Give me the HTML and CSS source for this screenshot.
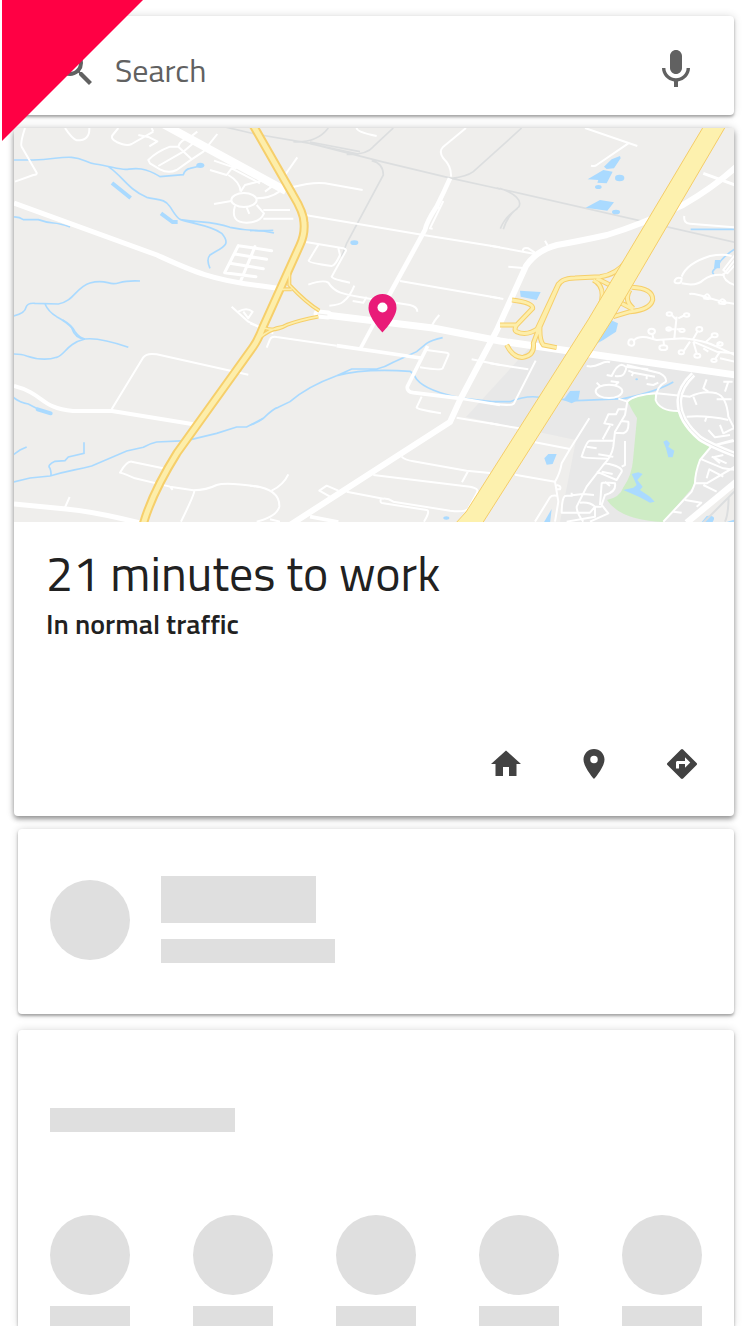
FILE: index.html
```html
<!DOCTYPE html>
<html lang="en">
<head>
<meta charset="utf-8">
<meta name="viewport" content="width=device-width, initial-scale=1">
<title>Commute</title>
<link rel="stylesheet" href="styles.css">
</head>
<body>
<div class="corner"></div>
<main class="feed">
  <form class="card search" role="search">
    <svg class="icon-lg" viewBox="0 0 24 24" aria-hidden="true"><path d="M15.500 14h-.79l-.28-.27A6.471 6.471 0 0 0 16 9.500 6.500 6.500 0 1 0 9.500 16c1.610 0 3.090-.59 4.230-1.570l.27.28v.79l5 4.990L20.490 19l-4.990-5zm-6 0C7.010 14 5 11.990 5 9.500S7.010 5 9.500 5 14 7.010 14 9.500 11.990 14 9.500 14z"/></svg>
    <input class="search-input" type="text" placeholder="Search" aria-label="Search">
    <button class="icon-button" type="button" aria-label="Voice search">
      <svg class="icon-lg" viewBox="0 -1 24 24" aria-hidden="true"><path d="M12 14c1.660 0 3-1.340 3-3V5c0-1.660-1.340-3-3-3S9 3.340 9 5v6c0 1.660 1.340 3 3 3zm5.300-3c0 3-2.540 5.100-5.300 5.100S6.700 14 6.700 11H5c0 3.410 2.720 6.230 6 6.720V20.500h2v-2.780c3.280-.48 6-3.300 6-6.720h-1.700z"/></svg>
    </button>
  </form>

  <article class="card commute">
    <svg class="map" viewBox="14 128 720 394" role="img" aria-label="Map of the route to work">
      <path fill="#e8e8e8" d="M466 417L530 347L734 376V485L690 522H560L576 440Z"/>
      <path fill="#ceecc5" d="M628 402Q638 394 655 394Q657 411 678 411Q690 436 711 447L700 460L693 487L663 522Q620 520 607 500Q620 497 623 488Q632 475 633 460L637 418L632 410Z"/>

      <!-- railways -->
      <g class="rail">
        <g transform="translate(250 120) scale(.3333)">
          <path d="M-100 15L15 42L180 70L395 125L605 175L750 207M130 65Q200 70 235 24M180 66L330 95M180 71L325 102M290 103Q350 105 370 80L430 24M365 122Q400 130 400 165L290 370L275 410M605 175Q650 170 670 155L815 24"/>
        </g>
        <g transform="translate(490 120) scale(.3333)">
          <path d="M20 204L735 367M30 205Q100 230 87 260Q50 290 40 328M83 265Q45 290 31 326"/>
        </g>
      </g>

      <!-- rivers and ponds -->
      <g class="water">
        <g transform="translate(10 120) scale(.3333)">
          <path d="M10 120H70C130 118 150 110 185 112S230 130 255 132C300 138 330 150 350 148S400 138 450 170L520 164Q525 148 540 145L570 138M295 140C340 170 350 205 410 232C440 240 465 235 480 260C490 275 500 295 512 299C580 310 600 302 660 322Q720 335 790 331M512 299C560 315 600 315 635 340C665 375 640 380 600 405Q588 418 600 445M10 291Q28 290 40 299H85Q110 308 130 309T180 321M10 588Q45 580 48 562Q52 548 75 550L145 552C190 545 200 500 240 489S290 490 310 491S330 480 390 483M105 552Q115 575 140 590Q170 606 185 623Q195 655 225 657"/>
          <path stroke-width="12" d="M306 189L362 234M453 280L488 306H503"/>
          <ellipse cx="571" cy="136" rx="12" ry="8"/>
        </g>
        <g transform="translate(250 120) scale(.3333)">
          <path d="M0 332Q30 330 72 339"/>
          <ellipse cx="313" cy="368" rx="12" ry="7"/>
        </g>
        <g transform="translate(490 120) scale(.3333)">
          <path class="pond" d="M342 140L365 118L390 108L392 115L372 145L350 147ZM293 178L340 150L368 155L350 190L322 188L325 180ZM287 263L330 240L372 247L352 272ZM90 512L152 516L140 540L92 530ZM675 420L690 420L690 445L672 445Z"/>
          <ellipse cx="389" cy="174" rx="14" ry="10"/><ellipse cx="325" cy="201" rx="10" ry="6"/><ellipse cx="378" cy="276" rx="12" ry="7"/>
          <path d="M602 328H735M738 385Q690 415 683 440Q660 455 672 463"/>
        </g>
        <g transform="translate(10 320) scale(.3333)">
          <path d="M10 102Q35 102 50 108Q100 125 140 112C165 105 170 70 225 57Q270 52 355 82M158 0Q185 15 195 35Q210 55 225 57M10 232Q30 248 55 252L85 268M10 404L30 390L50 381M10 486L60 474L120 468C180 450 190 452 245 438L350 393L400 382Q420 370 440 366L530 362L570 352L620 340L680 321H710L760 295M222 367V400L175 411L165 422L135 424Q110 435 120 445Q125 460 122 468"/>
          <path stroke-width="12" stroke-linecap="round" d="M83 268L122 280"/>
        </g>
        <g transform="translate(250 320) scale(.3333)">
          <path d="M0 315Q20 310 40 295Q70 265 85 262L120 245Q170 200 260 167L305 147H380Q405 142 430 127L500 95L530 70Q545 60 578 53M260 167Q340 145 480 154Q490 160 500 178Q530 215 640 235L725 245H780Q830 225 870 232L980 242L1120 236Q1220 215 1270 186"/>
          <ellipse cx="589" cy="594" rx="9" ry="5"/>
        </g>
        <g transform="translate(490 320) scale(.3333)">
          <path class="pond" d="M318 72L340 20L362 0L384 10L378 35L340 60ZM220 240L240 213L270 212L265 240L245 250ZM520 365L530 360L540 370L535 380L553 392L548 412L535 412L528 385ZM425 462L445 457L458 462L442 480L458 500L450 510L480 530L494 545L480 548L450 532L400 510L430 503L440 495ZM163 415L175 402L200 402L195 415L188 432L170 434ZM160 610L185 567L180 610ZM632 610L650 588Q685 585 665 610ZM710 606L735 598V610Z"/>
          <ellipse cx="440" cy="178" rx="4" ry="3"/>
        </g>
      </g>

      <!-- local streets -->
      <g class="street">
        <g transform="translate(10 120) scale(.3333)">
          <path d="M45 24Q30 70 35 80L80 158Q82 165 70 165L15 185M165 24Q185 55 200 61Q240 62 238 24M325 24L308 45Q300 55 320 66Q350 80 365 72L430 35M385 45L418 52L442 64L418 79M430 35L425 24M415 120Q440 95 480 80H505L545 118L500 150Q475 162 450 148L420 130ZM445 138L520 95L555 65M505 80Q510 60 540 52L562 35M545 118L580 95L622 42M600 150L650 165L665 145L750 190M612 122L680 145M655 165Q690 185 692 215M692 215L705 195L755 182L785 200L765 215M664 243L612 252M675 258Q660 308 710 308Q750 308 762 280L740 255M710 262L718 282M665 560L715 605L790 640M685 575Q710 560 728 575L715 595L700 575"/>
          <ellipse cx="702" cy="240" rx="38" ry="21"/>
          <path stroke-width="9" stroke-linecap="round" d="M685 377L644 458M735 380L690 488M685 377L785 392M675 402L770 418M660 430L760 446M644 458L738 470"/>
        </g>
        <g transform="translate(250 120) scale(.3333)">
          <path d="M105 165L142 112M125 202Q190 185 225 190L338 210M165 285L520 345L750 382M20 235Q60 235 88 215M40 270H120M40 296H130M168 366L280 385Q292 388 286 396L245 470Q248 478 300 488M205 374L176 422Q176 428 245 438Q255 438 270 405L265 385M175 494Q220 478 235 488C255 520 280 522 350 535L480 555Q502 560 502 575M313 497Q300 530 280 545Q270 555 238 557M308 543L340 548L350 530M450 483L750 535M545 620Q550 605 568 585M320 24Q320 36 380 48M648 24L580 80Q565 95 580 115Q605 140 603 170M580 243L540 325L548 326M555 262L568 264"/>
          <path stroke-width="14" d="M600 175Q580 220 560 260Q530 305 525 330L415 530"/>
          <path stroke-width="11" d="M415 530L330 688"/>
        </g>
        <g transform="translate(490 120) scale(.3333)">
          <path d="M285 24L442 78M415 70L320 135Q315 140 303 137M0 377L135 402M98 395Q98 380 115 385L135 398M55 440L100 444M165 362L175 380M0 530L40 537M583 288Q580 310 600 311L735 322M565 490Q550 490 555 480Q560 470 575 475Q575 490 565 490M575 470Q590 430 660 408Q700 400 725 408M575 490Q620 500 640 480Q665 462 700 465L735 420M735 405L700 450L712 460L735 435M700 460Q700 485 735 495M598 522Q610 518 650 532L695 545L735 552M640 535Q650 515 658 528T640 535M685 550Q695 530 705 543T685 550"/>
          <path stroke-width="9" d="M640 160L735 195"/>
        </g>
        <g transform="translate(10 320) scale(.3333)">
          <path d="M305 268L400 112Q410 98 440 103L715 164M470 447L365 425Q350 423 330 458Q345 462 375 475L480 500L550 511Q590 510 620 495Q650 485 750 501M553 511Q555 520 513 605M165 562L179 531M480 500L488 510"/>
        </g>
        <g transform="translate(250 320) scale(.3333)">
          <path d="M50 83L60 58Q65 48 80 51L260 77M530 90L590 98Q598 100 595 106L578 145Q572 152 510 142M515 230L500 262Q498 268 573 280M665 118L750 135M620 293L750 315M455 410Q465 420 490 424L650 452L720 459M655 452L636 487M370 465L660 500Q690 505 680 520L655 566Q645 578 600 572L430 545Q415 535 400 536L290 515M393 535Q388 550 400 550L530 570Q542 572 522 605M240 530L208 512L230 497L265 512M0 497Q90 505 88 560Q80 590 20 605M65 512Q100 495 115 463M60 598L90 605M0 10L25 20"/>
          <path stroke-width="11" d="M260 77L512 114M533 78L472 200Q470 215 490 218L630 235M180 590L265 606"/>
          <path stroke-width="8" d="M630 235L750 255"/>
        </g>
        <g transform="translate(490 320) scale(.3333)">
          <path d="M0 130L115 148M137 122L72 250Q65 260 0 250M0 310L88 325M135 367L240 387M298 295L240 387L215 430Q210 460 195 485L75 464M195 485L205 545L195 605M200 495Q215 497 210 508H200M135 605L180 532Q185 525 200 527M290 138Q310 142 330 132T360 127M350 165L365 168Q380 135 395 134Q415 138 405 155Q400 172 375 168M410 135L510 160Q530 170 528 185Q497 200 497 240Q510 275 570 273M415 152L430 158L425 168M430 158L495 170M470 163V178M470 192L490 195L505 188M405 140L475 148M362 184L385 187L375 197M320 188L332 200"/>
          <ellipse cx="357" cy="214" rx="40" ry="20"/>
          <path d="M412 245Q430 225 500 220L600 230Q640 210 680 220Q710 230 715 290L735 330M385 236L412 245L405 285L375 335L370 380Q365 410 340 435L290 500L260 560Q260 580 280 605M410 268H385L378 283H355L343 310L370 315M360 317L338 358M375 338L400 340Q418 335 415 305L395 303M370 362H300Q290 362 275 410Q280 415 355 416M290 380L320 385M325 403L370 410M405 363V435L395 440M345 430Q400 440 395 455L380 480L320 455M335 455L368 462M330 555L335 490Q340 485 375 490Q380 515 345 525L335 555L355 580L300 605M312 525L280 522L225 528Q215 535 215 578H300L315 560Q300 545 270 548M315 560V590L230 605M315 560H335M345 485L360 498M245 518V530"/>
          <path d="M735 362L665 378L630 420Q615 460 615 490L605 515L520 605M665 410L710 430M690 430L670 412L700 405M635 418L700 445L735 450M615 490H650L735 440M650 475L658 448L700 470M640 495L680 515M590 290Q650 285 715 300M650 178L640 205L655 215M680 238H725M610 230L620 255M700 185H728M715 185L705 215M690 315L700 340L730 325M655 330L675 352L720 345M675 375L730 360M650 290L645 305M585 540L634 548L620 560M550 575L575 578"/>
          <path d="M415 70Q415 58 424 58T433 68T424 77T415 70M433 60Q445 48 470 52L500 60L580 55Q640 60 680 80L735 105M610 65L680 95L735 100M490 55L487 42M520 58L522 75M553 55L560 -10M553 28H530M560 28H575M600 65L582 92M608 60L622 35M645 68L665 50M610 65L620 100M640 85L655 95M680 80L690 65M690 95L675 118M690 115L735 125M560 0L545 -15M565 -5L585 -15"/>
          <ellipse cx="485" cy="34" rx="10" ry="8"/><ellipse cx="520" cy="83" rx="12" ry="7"/><ellipse cx="536" cy="27" rx="7" ry="5"/><ellipse cx="576" cy="31" rx="8" ry="5"/><ellipse cx="574" cy="97" rx="8" ry="6"/><ellipse cx="628" cy="28" rx="9" ry="7"/><ellipse cx="674" cy="46" rx="9" ry="6"/><ellipse cx="622" cy="107" rx="9" ry="6"/><ellipse cx="672" cy="121" rx="8" ry="5"/><ellipse cx="690" cy="72" rx="8" ry="5"/><ellipse cx="538" cy="-18" rx="8" ry="5"/><ellipse cx="590" cy="-15" rx="8" ry="5"/>
          <path stroke-width="17" d="M610 163Q570 200 568 240Q565 300 630 355Q660 375 738 405"/>
          <path class="median" d="M610 163Q570 200 568 240Q565 300 630 355Q660 375 738 405"/>
          <path class="siding" d="M640 608L738 510M716 530Q715 585 705 605"/>
          <path stroke-width="19" d="M590 608L738 486"/>
        </g>
      </g>

      <!-- main roads -->
      <g class="road">
        <path stroke-width="5" d="M14 203L157 255C190 270 210 280 262 286L283 289"/>
        <path stroke-width="8" d="M163 124L286 191"/>
        <path stroke-width="4" d="M14 386C45 394 40 408 73 411H112L198 425"/>
        <path stroke-width="5" d="M14 504L66 509Q97 512 140 523"/>
        <path stroke-width="6" d="M736 167Q714 187 683 205Q640 225 607 235Q580 241 557 245Q537 250 526 266L497 330L460 400L450 422L290 525"/>
        <path stroke-width="7" d="M318 314L433 328L500 341L590 354L736 375"/>
        <path stroke-width="9" stroke-linecap="round" d="M318 314L328 315"/>
      </g>
      <path stroke="#efeeec" stroke-width="1" stroke-linecap="round" d="M318 314L327 315"/>

      <!-- highways and their ramps -->
      <g class="highway-case">
        <g transform="translate(250 120) scale(.3333)"><path stroke-width="12" d="M118 455V495Q170 550 208 572M90 508H125M45 625Q75 635 110 615Q150 600 205 590M20 660Q60 625 100 620"/></g>
        <g transform="translate(490 120) scale(.3333)"><path stroke-width="15" d="M412 420Q380 465 330 470L255 474Q210 475 203 500L150 620Q148 660 160 675L200 683M206 490L140 630M310 480Q350 500 330 560L280 640M320 475L370 500M425 502Q490 505 488 540Q480 570 420 575L370 590M420 510Q400 540 430 565M395 550L430 568M66 540Q130 548 128 565L80 615H30M80 615Q70 630 80 635Q110 650 145 625M50 675Q70 715 100 712Q135 705 130 670L145 630"/></g>
        <path stroke-width="9" d="M253 125L293 195Q304 213 304 223Q305 234 300 245L263 327Q258 340 253 347L177 453Q152 493 143 525"/>
      </g>
      <g class="highway-fill">
        <g transform="translate(250 120) scale(.3333)"><path stroke-width="5" d="M118 455V495Q170 550 208 572M90 508H125M45 625Q75 635 110 615Q150 600 205 590M20 660Q60 625 100 620"/></g>
        <g transform="translate(490 120) scale(.3333)"><path stroke-width="9" d="M412 420Q380 465 330 470L255 474Q210 475 203 500L150 620Q148 660 160 675L200 683M206 490L140 630M310 480Q350 500 330 560L280 640M320 475L370 500M425 502Q490 505 488 540Q480 570 420 575L370 590M420 510Q400 540 430 565M395 550L430 568M66 540Q130 548 128 565L80 615H30M80 615Q70 630 80 635Q110 650 145 625M50 675Q70 715 100 712Q135 705 130 670L145 630"/></g>
        <path stroke-width="5" d="M253 125L293 195Q304 213 304 223Q305 234 300 245L263 327Q258 340 253 347L177 453Q152 493 143 525"/>
      </g>
      <path fill="#fdf1ae" stroke="#f5cd68" d="M705 124L727 124L612 320L482 524H455L466 512L588 320Z"/>

      <!-- current position -->
      <path fill="#e91b78" d="M382.500 294A14 14 0 0 0 368.500 308C368.500 318 382.500 332.500 382.500 332.500S396.500 318 396.500 308A14 14 0 0 0 382.500 294Z"/>
      <circle cx="382.500" cy="307.500" r="5" fill="#fff"/>
    </svg>
    <div class="commute-text">
      <h1 class="commute-title">21 minutes to work</h1>
      <p class="commute-note">In normal traffic</p>
    </div>
    <div class="actions">
      <button class="icon-button" type="button" aria-label="Home"><svg class="icon-md" viewBox="0 0 24 24" aria-hidden="true"><path d="M10 20v-6h4v6h5v-8h3L12 3 2 12h3v8z"/></svg></button>
      <button class="icon-button" type="button" aria-label="Place"><svg class="icon-md" viewBox="0 0 24 24" aria-hidden="true"><path d="M12 2C8.130 2 5 5.130 5 9c0 5.250 7 13 7 13s7-7.750 7-13c0-3.870-3.130-7-7-7zm0 9.500A2.500 2.500 0 1 1 12 6.500a2.500 2.500 0 0 1 0 5z"/></svg></button>
      <button class="icon-button" type="button" aria-label="Directions"><svg class="icon-md" viewBox="0 0 24 24" aria-hidden="true"><path d="M21.710 11.290l-9-9a1 1 0 0 0-1.410 0l-9 9a1 1 0 0 0 0 1.410l9 9c.39.39 1.020.39 1.410 0l9-9a1 1 0 0 0 0-1.410zM14 14.500V12h-4v3H8v-4c0-.55.45-1 1-1h5V7.500l3.500 3.500-3.500 3.500z"/></svg></button>
    </div>
  </article>

  <section class="card profile" aria-hidden="true">
    <span class="dot"></span>
    <div class="lines">
      <span class="block block-title"></span>
      <span class="block block-text"></span>
    </div>
  </section>

  <section class="card contacts" aria-hidden="true">
    <span class="block block-heading"></span>
    <div class="people">
      <div class="person"><span class="dot"></span><span class="block"></span></div>
      <div class="person"><span class="dot"></span><span class="block"></span></div>
      <div class="person"><span class="dot"></span><span class="block"></span></div>
      <div class="person"><span class="dot"></span><span class="block"></span></div>
      <div class="person"><span class="dot"></span><span class="block"></span></div>
    </div>
  </section>
</main>
</body>
</html>
```
FILE: styles.css
```css
* {
  box-sizing: border-box;
}

body {
  margin: 0;
  background: #fff;
  color: #212121;
  font-family: "Titillium Web", Roboto, "Liberation Sans", sans-serif;
}

.corner {
  position: absolute;
  top: 0;
  left: 2px;
  z-index: 1;
  width: 141px;
  height: 141px;
  background: #ff0044;
  clip-path: polygon(0 0, 100% 0, 0 100%);
}

.feed {
  display: flex;
  flex-direction: column;
  padding: 16px 14px 0;
  overflow: hidden;
}

.card {
  background: #fff;
  border-radius: 4px;
  box-shadow: 0 2px 3px rgba(0, 0, 0, 0.32), 0 0 8px rgba(0, 0, 0, 0.14);
}

.search {
  display: flex;
  align-items: center;
  height: 99px;
  margin-bottom: 13px;
  padding: 4px 34px 0 37px;
  color: #616161;
}

.search-input {
  flex: 1;
  min-width: 0;
  margin-left: 16px;
  padding: 4px 0 0;
  border: 0;
  outline: 0;
  background: transparent;
  color: #616161;
  font: inherit;
  font-size: 32px;
  line-height: 40px;
}

.search-input::placeholder {
  color: #616161;
  opacity: 1;
}

.icon-button {
  display: flex;
  padding: 0;
  border: 0;
  background: none;
  color: inherit;
  cursor: pointer;
}

.icon-lg,
.icon-md {
  display: block;
  flex: none;
  fill: currentColor;
}

.icon-lg {
  width: 48px;
  height: 48px;
}

.icon-md {
  width: 36px;
  height: 36px;
}

.commute {
  margin-bottom: 13px;
  box-shadow: 0 3px 5px rgba(0, 0, 0, 0.36), 0 0 9px rgba(0, 0, 0, 0.18);
}

.map {
  display: block;
  width: 100%;
  background: #efeeec;
  fill: none;
}

.rail {
  stroke: #dcdedf;
  stroke-width: 5;
}

.water {
  stroke: #aadaff;
  stroke-width: 5;
}

.water ellipse,
.pond {
  fill: #aadaff;
  stroke: none;
}

.street {
  stroke: #fff;
  stroke-width: 6;
  stroke-linejoin: round;
}

.median {
  stroke: #e8e8e8;
  stroke-width: 3;
}

.siding {
  stroke: #dcdedf;
}

.road {
  stroke: #fff;
  stroke-linejoin: round;
}

.highway-case {
  stroke: #f6cf6b;
}

.highway-fill {
  stroke: #fdeeaa;
}

.commute-text {
  padding: 24px 32px 0;
}

.commute-title,
.commute-note {
  margin: 0;
}

.commute-title {
  font-size: 48px;
  font-weight: 400;
  line-height: 56px;
}

.commute-note {
  font-size: 28px;
  font-weight: 600;
  line-height: 44px;
}

.actions {
  display: flex;
  justify-content: flex-end;
  gap: 52px;
  padding: 100px 34px 34px;
  color: #424242;
}

.profile {
  display: flex;
  align-items: center;
  gap: 31px;
  height: 185px;
  margin: 0 0 16px 4px;
  padding: 0 32px 4px;
}

.dot {
  display: block;
  width: 80px;
  height: 80px;
  border-radius: 50%;
  background: #dfdfdf;
}

.block {
  display: block;
  height: 24px;
  background: #dfdfdf;
}

.lines {
  display: grid;
  gap: 16px;
}

.block-title {
  width: 155px;
  height: 47px;
}

.block-text {
  width: 174px;
}

.contacts {
  margin-left: 4px;
  padding: 78px 32px 0;
  border-radius: 4px 4px 0 0;
}

.block-heading {
  width: 185px;
}

.people {
  display: flex;
  justify-content: space-between;
  margin-top: 83px;
}

.person {
  display: grid;
  gap: 11px;
}

.person .block {
  height: 20px;
}
```
